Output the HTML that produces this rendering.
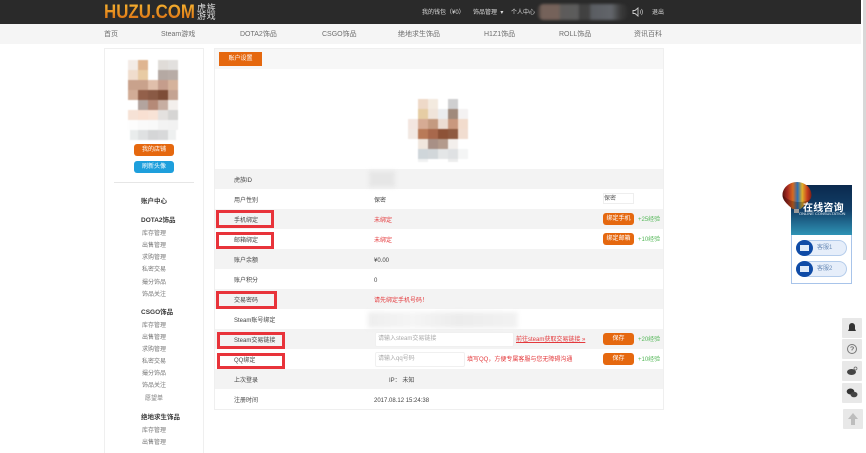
<!DOCTYPE html>
<html lang="zh"><head><meta charset="utf-8"><title>账户设置</title>
<style>
*{box-sizing:border-box;margin:0;padding:0}
html,body{width:866px;height:453px;overflow:hidden;background:#fff}
body{font-family:"Liberation Sans","Noto Sans CJK SC",sans-serif;font-size:6px;color:#555}
#w{position:absolute;left:0;top:0;width:866px;height:453px;overflow:hidden;filter:blur(.3px)}
.a,.t{position:absolute}
.t{white-space:nowrap;line-height:10px;height:10px;margin-top:1px}
.n{font-size:7px;color:#6f6f6f;margin-top:2px}
.h{color:#ddd}
.b{font-weight:bold;color:#3c3c3c;font-size:6.5px}
.s{color:#777}
.l{color:#444}
.r{color:#e4393c}
.g{color:#56b85a}
.btn{position:absolute;border-radius:3px;background:#e5680f;color:#fff;text-align:center;line-height:12px;height:12px;font-size:6px}
.row{position:absolute;left:215px;width:448px;height:20px}
.red{position:absolute;border:3px solid #e8333a}
.side{position:absolute;left:842px;width:20px;height:20px;background:#e8e8e8;border-radius:1px}
.pill{position:absolute;left:796px;width:51px;height:16px;border-radius:8px;background:#e6eefa;border:1px solid #b4cceb;color:#6b8cb8;font-size:6px;line-height:14px;padding-left:20px}
.pill i{position:absolute;left:-1px;top:-1px;width:17px;height:16px;border-radius:50%;background:#0f4ba6}
.pill i:after{content:"";position:absolute;left:4px;top:5px;width:9px;height:6px;background:#dfeaf8}
</style></head><body><div id="w">

<div class="a" style="left:0;top:0;width:861px;height:24px;background:#2a2a2a"></div>
<div class="a" style="left:0;top:24px;width:861px;height:20px;background:#f5f5f5"></div>
<div class="a" style="left:861px;top:0;width:5px;height:453px;background:#fff"></div>
<div class="a" style="left:863px;top:0;width:3px;height:260px;background:#d8d8d8"></div>

<div class="t" style="margin-top:0;left:104px;top:2px;height:20px;line-height:20px;font-size:19.5px;font-weight:bold;transform:scaleX(.866);transform-origin:0 50%;background:linear-gradient(#f7b733,#d9690f);-webkit-background-clip:text;background-clip:text;color:transparent">HUZU.COM</div>
<div class="t" style="margin-top:0;left:197px;top:4px;font-size:9px;line-height:9px;height:9px;color:#ddd;letter-spacing:.6px">虎族</div>
<div class="t" style="margin-top:0;left:197px;top:12px;font-size:9px;line-height:9px;height:9px;color:#ddd;letter-spacing:.6px">游戏</div>

<div class="t h" style="left:422px;top:7px">我的钱包（¥0）</div>
<div class="t h" style="left:473px;top:7px">饰品管理 &nbsp;▾</div>
<div class="t h" style="left:511px;top:7px">个人中心</div>
<div class="a" style="left:537px;top:4px;width:91px;height:16px;border-radius:7px;background:linear-gradient(90deg,#2d2d2d 0,#75625a 5%,#75625a 24%,#5d5b5a 26%,#5c5c5c 45%,#404040 47%,#424242 57%,#5a5d62 60%,#62656a 82%,#3a3a3a 92%,#2d2d2d 100%);filter:blur(1.2px)"></div>
<svg class="a" style="left:632px;top:6px" width="12" height="12" viewBox="0 0 12 12"><path d="M1 4.5h2l3-2.5v8l-3-2.5H1z" fill="none" stroke="#ccc" stroke-width=".9"/><path d="M8 4.2q1.2 1.8 0 3.6M9.5 3q2 3 0 6" fill="none" stroke="#bbb" stroke-width=".7"/></svg>
<div class="t h" style="left:652px;top:7px">退出</div>

<div class="t n" style="left:104px;top:28px">首页</div>
<div class="t n" style="left:161px;top:28px">Steam游戏</div>
<div class="t n" style="left:240px;top:28px">DOTA2饰品</div>
<div class="t n" style="left:322px;top:28px">CSGO饰品</div>
<div class="t n" style="left:398px;top:28px">绝地求生饰品</div>
<div class="t n" style="left:484px;top:28px">H1Z1饰品</div>
<div class="t n" style="left:559px;top:28px">ROLL饰品</div>
<div class="t n" style="left:634px;top:28px">资讯百科</div>

<!-- sidebar -->
<div class="a" style="left:104px;top:48px;width:100px;height:420px;border:1px solid #efefef"></div>
<svg class="a" style="left:128px;top:60px;filter:blur(.5px)" width="50" height="80" shape-rendering="crispEdges">
<g>
<rect x="0" y="0" width="10" height="10" fill="#f3ebe6"/><rect x="10" y="0" width="10" height="10" fill="#dfb591"/><rect x="30" y="0" width="10" height="10" fill="#e0dcd8"/><rect x="40" y="0" width="10" height="10" fill="#e2e0de"/>
<rect x="0" y="10" width="10" height="10" fill="#f0ddcd"/><rect x="10" y="10" width="10" height="10" fill="#e8cba4"/><rect x="30" y="10" width="10" height="10" fill="#b5a9a3"/><rect x="40" y="10" width="10" height="10" fill="#b8aca6"/>
<rect x="0" y="20" width="10" height="10" fill="#c9a28c"/><rect x="10" y="20" width="10" height="10" fill="#c9a28c"/><rect x="20" y="20" width="10" height="10" fill="#e0bfab"/><rect x="30" y="20" width="10" height="10" fill="#c59d8c"/><rect x="40" y="20" width="10" height="10" fill="#d5b39c"/>
<rect x="0" y="30" width="10" height="10" fill="#d2ac96"/><rect x="10" y="30" width="10" height="10" fill="#93604a"/><rect x="20" y="30" width="10" height="10" fill="#8a5a45"/><rect x="30" y="30" width="10" height="10" fill="#7e4d38"/><rect x="40" y="30" width="10" height="10" fill="#c4a392"/>
<rect x="10" y="40" width="10" height="10" fill="#b3a49e"/><rect x="20" y="40" width="10" height="10" fill="#b58a78"/><rect x="30" y="40" width="10" height="10" fill="#c7aea2"/><rect x="40" y="40" width="10" height="10" fill="#f3efec"/>
<rect x="0" y="50" width="10" height="10" fill="#f6e2d6"/><rect x="10" y="50" width="10" height="10" fill="#f9e0d2"/><rect x="20" y="50" width="10" height="10" fill="#f8e3d6"/><rect x="30" y="50" width="10" height="10" fill="#e4e1df"/><rect x="40" y="50" width="10" height="10" fill="#d6d5d4"/>
<rect x="0" y="60" width="10" height="10" fill="#fdfdfd"/><rect x="10" y="60" width="10" height="10" fill="#fafafa"/><rect x="20" y="60" width="10" height="10" fill="#f9f9f9"/><rect x="30" y="60" width="10" height="10" fill="#f3f3f3"/><rect x="40" y="60" width="10" height="10" fill="#f2f2f2"/>
<rect x="2" y="70" width="8" height="10" fill="#e9ecec"/><rect x="10" y="70" width="10" height="10" fill="#dfe1e2"/><rect x="20" y="70" width="10" height="10" fill="#d5d6d7"/><rect x="30" y="70" width="10" height="10" fill="#d8d9da"/><rect x="40" y="70" width="8" height="10" fill="#eef0f0"/>
</g></svg>
<div class="btn" style="left:134px;top:144px;width:40px">我的店铺</div>
<div class="btn" style="left:134px;top:161px;width:40px;background:#1e9fdc">刷新头像</div>
<div class="a" style="left:114px;top:182px;width:80px;height:1px;background:#e6e6e6"></div>
<div class="t b" style="left:141px;top:196px">账户中心</div>
<div class="t b" style="left:141px;top:215px">DOTA2饰品</div>
<div class="t s" style="left:142px;top:228px">库存管理</div>
<div class="t s" style="left:142px;top:240px">出售管理</div>
<div class="t s" style="left:142px;top:252px">求购管理</div>
<div class="t s" style="left:142px;top:264px">私密交易</div>
<div class="t s" style="left:142px;top:277px">撮分饰品</div>
<div class="t s" style="left:142px;top:289px">饰品关注</div>
<div class="t b" style="left:141px;top:307px">CSGO饰品</div>
<div class="t s" style="left:142px;top:320px">库存管理</div>
<div class="t s" style="left:142px;top:332px">出售管理</div>
<div class="t s" style="left:142px;top:344px">求购管理</div>
<div class="t s" style="left:142px;top:356px">私密交易</div>
<div class="t s" style="left:142px;top:368px">撮分饰品</div>
<div class="t s" style="left:142px;top:380px">饰品关注</div>
<div class="t s" style="left:145px;top:393px">愿望单</div>
<div class="t b" style="left:141px;top:412px">绝地求生饰品</div>
<div class="t s" style="left:142px;top:425px">库存管理</div>
<div class="t s" style="left:142px;top:437px">出售管理</div>

<!-- main -->
<div class="a" style="left:214px;top:48px;width:450px;height:362px;border:1px solid #efefef"></div>
<div class="a" style="left:215px;top:49px;width:448px;height:20px;background:#f7f7f7"></div>
<div class="btn" style="left:219px;top:52px;width:43px;height:14px;line-height:14px;border-radius:0">账户设置</div>

<svg class="a" style="left:408px;top:99px;filter:blur(.5px)" width="60" height="70" shape-rendering="crispEdges">
<rect x="10" y="0" width="10" height="10" fill="#eed9c8"/><rect x="20" y="0" width="10" height="10" fill="#f3eadf"/><rect x="40" y="0" width="10" height="10" fill="#cfcfd0"/>
<rect x="10" y="10" width="10" height="10" fill="#e6cda4"/><rect x="20" y="10" width="10" height="10" fill="#f0e4da"/><rect x="30" y="10" width="10" height="10" fill="#ebecee"/><rect x="40" y="10" width="10" height="10" fill="#a08a7c"/><rect x="50" y="10" width="10" height="10" fill="#f4f2f2"/>
<rect x="0" y="20" width="10" height="10" fill="#f3e6e0"/><rect x="10" y="20" width="10" height="10" fill="#d6ab94"/><rect x="20" y="20" width="10" height="10" fill="#c49a80"/><rect x="30" y="20" width="10" height="10" fill="#ecdcd2"/><rect x="40" y="20" width="10" height="10" fill="#c9987e"/><rect x="50" y="20" width="10" height="10" fill="#f2dccd"/>
<rect x="0" y="30" width="10" height="10" fill="#f2e8e2"/><rect x="10" y="30" width="10" height="10" fill="#b97a58"/><rect x="20" y="30" width="10" height="10" fill="#a8684c"/><rect x="30" y="30" width="10" height="10" fill="#8d5237"/><rect x="40" y="30" width="10" height="10" fill="#8f5a40"/><rect x="50" y="30" width="10" height="10" fill="#f1ddd0"/>
<rect x="10" y="40" width="10" height="10" fill="#f0e6dd"/><rect x="20" y="40" width="10" height="10" fill="#a89086"/><rect x="30" y="40" width="10" height="10" fill="#b39a8c"/><rect x="40" y="40" width="10" height="10" fill="#f3efec"/>
<rect x="10" y="50" width="10" height="10" fill="#cfd6da"/><rect x="20" y="50" width="10" height="10" fill="#d2d7da"/><rect x="30" y="50" width="10" height="10" fill="#e4e6e7"/><rect x="40" y="50" width="10" height="10" fill="#dfe1e3"/><rect x="50" y="50" width="10" height="10" fill="#f4f5f5"/>
<rect x="10" y="60" width="10" height="3" fill="#f0f1f2"/><rect x="40" y="60" width="10" height="3" fill="#eceded"/>
</svg>

<div class="row" style="top:169px;background:#f3f3f3"></div>
<div class="row" style="top:209px;background:#f3f3f3"></div>
<div class="row" style="top:249px;background:#f3f3f3"></div>
<div class="row" style="top:289px;background:#f3f3f3"></div>
<div class="row" style="top:329px;background:#f3f3f3"></div>
<div class="row" style="top:369px;background:#f3f3f3"></div>

<div class="t l" style="left:234px;top:175px">虎族ID</div>
<div class="t l" style="left:234px;top:195px">用户性别</div>
<div class="t l" style="left:234px;top:215px">手机绑定</div>
<div class="t l" style="left:234px;top:235px">邮箱绑定</div>
<div class="t l" style="left:234px;top:255px">账户余额</div>
<div class="t l" style="left:234px;top:275px">账户积分</div>
<div class="t l" style="left:234px;top:295px">交易密码</div>
<div class="t l" style="left:234px;top:315px">Steam账号绑定</div>
<div class="t l" style="left:234px;top:335px">Steam交易链接</div>
<div class="t l" style="left:234px;top:355px">QQ绑定</div>
<div class="t l" style="left:234px;top:375px">上次登录</div>
<div class="t l" style="left:234px;top:395px">注册时间</div>

<div class="a" style="left:369px;top:171px;width:26px;height:16px;background:#e6e6e6;filter:blur(2px)"></div>
<div class="t l" style="left:374px;top:195px">保密</div>
<div class="t r" style="left:374px;top:215px">未绑定</div>
<div class="t r" style="left:374px;top:235px">未绑定</div>
<div class="t l" style="left:374px;top:255px">¥0.00</div>
<div class="t l" style="left:374px;top:275px">0</div>
<div class="t r" style="left:374px;top:295px">请先绑定手机号码！</div>
<div class="a" style="left:368px;top:312px;width:150px;height:16px;background:linear-gradient(90deg,#eee,#f5f5f5 30%,#ececec 60%,#f2f2f2);filter:blur(2.5px)"></div>
<div class="t l" style="left:389px;top:375px">IP： 未知</div>
<div class="t l" style="left:374px;top:395px">2017.08.12 15:24:38</div>

<div class="a" style="left:603px;top:193px;width:31px;height:11px;background:#fff;border:1px solid #eee;font-size:6px;line-height:10px;color:#555">保密</div>
<div class="btn" style="left:603px;top:213px;width:31px">绑定手机</div>
<div class="t g" style="left:638px;top:214px">+25经验</div>
<div class="btn" style="left:603px;top:233px;width:31px">绑定邮箱</div>
<div class="t g" style="left:638px;top:234px">+10经验</div>

<div class="a" style="left:375px;top:332px;width:139px;height:15px;background:#fff;border:1px solid #f0f0f0;border-radius:2px;color:#aaa;line-height:13px;padding-left:2px">请输入steam交易链接</div>
<div class="t r" style="left:516px;top:334px;text-decoration:underline">前往steam获取交易链接 »</div>
<div class="btn" style="left:603px;top:333px;width:31px">保存</div>
<div class="t g" style="left:638px;top:334px">+20经验</div>
<div class="a" style="left:375px;top:352px;width:90px;height:15px;background:#fff;border:1px solid #f0f0f0;border-radius:2px;color:#aaa;line-height:13px;padding-left:2px">请输入qq号码</div>
<div class="t r" style="left:467px;top:354px">填写QQ，方便专属客服与您无障碍沟通</div>
<div class="btn" style="left:603px;top:353px;width:31px">保存</div>
<div class="t g" style="left:638px;top:354px">+10经验</div>

<div class="red" style="left:216px;top:210px;width:58px;height:18px"></div>
<div class="red" style="left:216px;top:232px;width:58px;height:17px"></div>
<div class="red" style="left:216px;top:291px;width:61px;height:18px"></div>
<div class="red" style="left:217px;top:332px;width:68px;height:17px"></div>
<div class="red" style="left:217px;top:353px;width:68px;height:16px"></div>

<!-- consult widget -->
<div class="a" style="left:791px;top:185px;width:61px;height:50px;background:linear-gradient(#0b2a4e,#123f68 50%,#2f93b5 100%)"></div>
<div class="a" style="left:791px;top:235px;width:61px;height:49px;background:#fff;border:1px solid #a8c4ea;border-top:0"></div>
<svg class="a" style="left:781px;top:181px" width="32" height="36" viewBox="0 0 32 36">
<defs><linearGradient id="bl" x1="0" x2="1" y1="0" y2="0"><stop offset="0" stop-color="#5a1410"/><stop offset=".18" stop-color="#a82a20"/><stop offset=".36" stop-color="#d66a20"/><stop offset=".52" stop-color="#2b6fb5"/><stop offset=".68" stop-color="#e0b02a"/><stop offset=".85" stop-color="#c9401f"/><stop offset="1" stop-color="#7a1d16"/></linearGradient></defs>
<path d="M16 1C8 1 1.500 7 1.500 14c0 6 6 10 10 14h8c4-4 11-8 11-14C30.500 7 24 1 16 1z" fill="url(#bl)"/>
<path d="M1.500 14c0 6 6 10 10 14h8c3-3 8-6 10-10-8 5-20 4-28-4z" fill="#000" opacity=".25"/>
<rect x="13" y="28" width="5" height="4" fill="#9a9a9a"/>
</svg>
<div class="t" style="left:803px;top:203px;font-size:10px;font-weight:bold;color:#fff;letter-spacing:.2px">在线咨询</div>
<div class="t" style="left:799px;top:208px;font-size:4px;color:#e6eef5;line-height:10px">ONLINE CONSULTATION</div>
<div class="pill" style="top:240px">客服1<i></i></div>
<div class="pill" style="top:261px">客服2<i></i></div>

<!-- side buttons -->
<div class="side" style="top:318px"><svg width="20" height="20"><path d="M6 13h8l-1-2V8a3 3 0 0 0-6 0v3z" fill="#333"/></svg></div>
<div class="side" style="top:339px"><svg width="20" height="20"><circle cx="10" cy="10" r="4.500" fill="none" stroke="#777" stroke-width="1"/><path d="M8.500 8.500q1.500-1.500 3 0q0 1.200-1.500 2v1" fill="none" stroke="#777" stroke-width=".9"/></svg></div>
<div class="side" style="top:361px"><svg width="20" height="20"><ellipse cx="9.500" cy="11" rx="4.500" ry="3" fill="#444"/><circle cx="13.500" cy="7.500" r="1.500" fill="none" stroke="#666" stroke-width=".7"/></svg></div>
<div class="side" style="top:383px"><svg width="20" height="20"><ellipse cx="8.500" cy="8.500" rx="3.800" ry="3" fill="#333"/><ellipse cx="12" cy="11.500" rx="3.500" ry="2.800" fill="#444"/></svg></div>
<div class="side" style="top:409px;left:843px"><svg width="20" height="20"><path d="M10 4l5 6h-3v6H8v-6H5z" fill="#bdbdbd"/></svg></div>

</div></body></html>
